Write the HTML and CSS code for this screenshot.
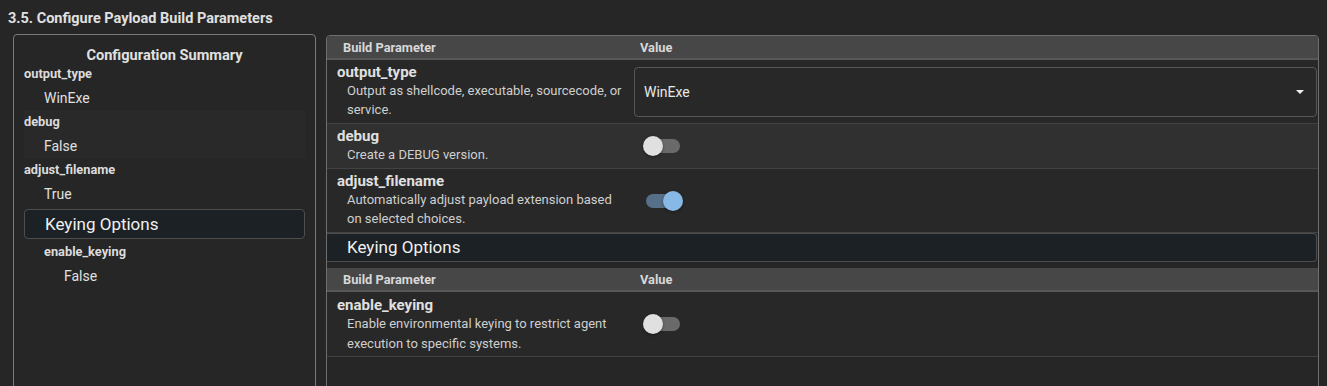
FILE: index.html
```html
<!DOCTYPE html>
<html lang="en">
<head>
    <meta charset="UTF-8">
    <meta name="viewport" content="width=device-width, initial-scale=1.0">
    <title>Configure Payload Build Parameters</title>
    <link rel="stylesheet" href="styles.css">
</head>
<body>
    <h2 class="section-title">3.5. Configure Payload Build Parameters</h2>
    <div class="layout">
        <aside class="summary">
            <h3>Configuration Summary</h3>
            <div class="summary-item">
                <div class="summary-key">output_type</div>
                <div class="summary-value">WinExe</div>
            </div>
            <div class="summary-item hover">
                <div class="summary-key">debug</div>
                <div class="summary-value">False</div>
            </div>
            <div class="summary-item">
                <div class="summary-key">adjust_filename</div>
                <div class="summary-value">True</div>
            </div>
            <div class="summary-group">Keying Options</div>
            <div class="summary-item nested">
                <div class="summary-key">enable_keying</div>
                <div class="summary-value">False</div>
            </div>
        </aside>

        <section class="params">
            <div class="param-head">
                <div class="col-name">Build Parameter</div>
                <div class="col-value">Value</div>
            </div>
            <div class="param-row">
                <div class="param-info">
                    <div class="param-name">output_type</div>
                    <div class="param-desc">Output as shellcode, executable, sourcecode, or service.</div>
                </div>
                <div class="param-value">
                    <div class="select">
                        <span>WinExe</span>
                        <span class="select-arrow"></span>
                    </div>
                </div>
            </div>
            <div class="param-row alt">
                <div class="param-info">
                    <div class="param-name">debug</div>
                    <div class="param-desc">Create a DEBUG version.</div>
                </div>
                <div class="param-value">
                    <span class="switch"><span class="track"></span><span class="thumb"></span></span>
                </div>
            </div>
            <div class="param-row">
                <div class="param-info">
                    <div class="param-name">adjust_filename</div>
                    <div class="param-desc">Automatically adjust payload extension based on selected choices.</div>
                </div>
                <div class="param-value">
                    <span class="switch on"><span class="track"></span><span class="thumb"></span></span>
                </div>
            </div>

            <div class="group-title">Keying Options</div>

            <div class="param-head second">
                <div class="col-name">Build Parameter</div>
                <div class="col-value">Value</div>
            </div>
            <div class="param-row tall">
                <div class="param-info">
                    <div class="param-name">enable_keying</div>
                    <div class="param-desc">Enable environmental keying to restrict agent execution to specific systems.</div>
                </div>
                <div class="param-value">
                    <span class="switch"><span class="track"></span><span class="thumb"></span></span>
                </div>
            </div>
        </section>
    </div>
</body>
</html>
```

FILE: styles.css
```css
body {
    font-family: Roboto, "Liberation Sans", sans-serif;
    margin: 0;
    padding: 8px;
    background-color: #262626;
    color: #e0e0e0;
    overflow: hidden;
}
.section-title {
    margin: 0;
    font-size: 14.5px;
    font-weight: bold;
    line-height: 21px;
    color: #e0e0e0;
}
.layout {
    display: flex;
    align-items: flex-start;
    margin-top: 5px;
}

/* left summary */
.summary {
    width: 303px;
    height: 420px;
    box-sizing: border-box;
    margin-left: 5px;
    margin-right: 10px;
    border: 1px solid #7a7a7a;
    border-radius: 4px;
    padding: 10px 10px 0 10px;
    flex-shrink: 0;
}
.summary h3 {
    margin: 0 0 -2px 0;
    text-align: center;
    font-size: 14.6px;
    line-height: 20px;
    font-weight: bold;
    color: #e0e0e0;
}
.summary-key {
    font-size: 12.8px;
    font-weight: bold;
    line-height: 22px;
    color: #dcdcdc;
}
.summary-value {
    font-size: 14px;
    line-height: 26px;
    padding-left: 20px;
    color: #e0e0e0;
}
.summary-item.hover {
    background: #292929;
}
.summary-item.nested {
    padding-left: 20px;
    margin-top: 2px;
}
.summary-group {
    margin-top: 2px;
    height: 28px;
    line-height: 28px;
    padding-left: 20px;
    font-size: 17px;
    color: #f0f0f0;
    background: #1c2126;
    border: 1px solid #4d4d4d;
    border-radius: 4px;
}

/* right parameter table */
.params {
    flex: 1;
    height: 420px;
    margin-top: 1px;
    border: 1px solid #6e6e6e;
    border-radius: 4px;
    overflow: hidden;
}
.param-head {
    display: flex;
    background: #474747;
    border-bottom: 2px solid #575757;
    height: 22px;
    line-height: 23px;
    font-size: 12.8px;
    font-weight: bold;
    color: #d8d8d8;
}
.param-head.second {
    margin-top: 6px;
}
.col-name {
    width: 303px;
    box-sizing: border-box;
    padding-left: 16px;
}
.col-value {
    padding-left: 10px;
}
.param-row {
    display: flex;
    align-items: center;
    background: #282828;
    border-bottom: 1px solid #424242;
}
.param-row.alt {
    background: #303030;
}
.param-info {
    width: 303px;
    box-sizing: border-box;
    padding: 3px 8px 4px 10px;
}
.param-row.tall .param-info {
    padding: 4px 8px 2px 10px;
}
.param-row.tall .param-desc {
    line-height: 20px;
}
.param-name {
    font-size: 15px;
    font-weight: bold;
    line-height: 18px;
    color: #e0e0e0;
}
.param-desc {
    font-size: 13px;
    line-height: 19px;
    padding-left: 10px;
    color: #cfcfcf;
}
.param-value {
    flex: 1;
    padding: 0 1px 0 4px;
}
.select {
    display: flex;
    align-items: center;
    justify-content: space-between;
    height: 48px;
    padding: 0 12px 0 9px;
    border: 1px solid #555;
    border-radius: 4px;
    font-size: 14px;
    color: #e8e8e8;
}
.select-arrow {
    width: 0;
    height: 0;
    border-left: 4px solid transparent;
    border-right: 4px solid transparent;
    border-top: 4px solid #f0f0f0;
}
.switch {
    position: relative;
    display: inline-block;
    width: 58px;
    height: 38px;
    vertical-align: middle;
}
.switch .track {
    position: absolute;
    left: 12px;
    top: 12px;
    width: 34px;
    height: 14px;
    border-radius: 7px;
    background: #6a6a6a;
}
.switch .thumb {
    position: absolute;
    left: 9px;
    top: 9px;
    width: 20px;
    height: 20px;
    border-radius: 50%;
    background: #e0e0e0;
    box-shadow: 0 1px 3px rgba(0, 0, 0, 0.4);
}
.switch.on .track {
    background: #56708a;
}
.switch.on .thumb {
    left: 29px;
    background: #88b8e6;
}
.group-title {
    height: 27px;
    line-height: 27px;
    margin-right: 1px;
    padding-left: 20px;
    font-size: 17px;
    color: #f0f0f0;
    background: #1c2126;
    border: 1px solid #4d4d4d;
    border-left: none;
    border-radius: 0 4px 4px 0;
}
```
